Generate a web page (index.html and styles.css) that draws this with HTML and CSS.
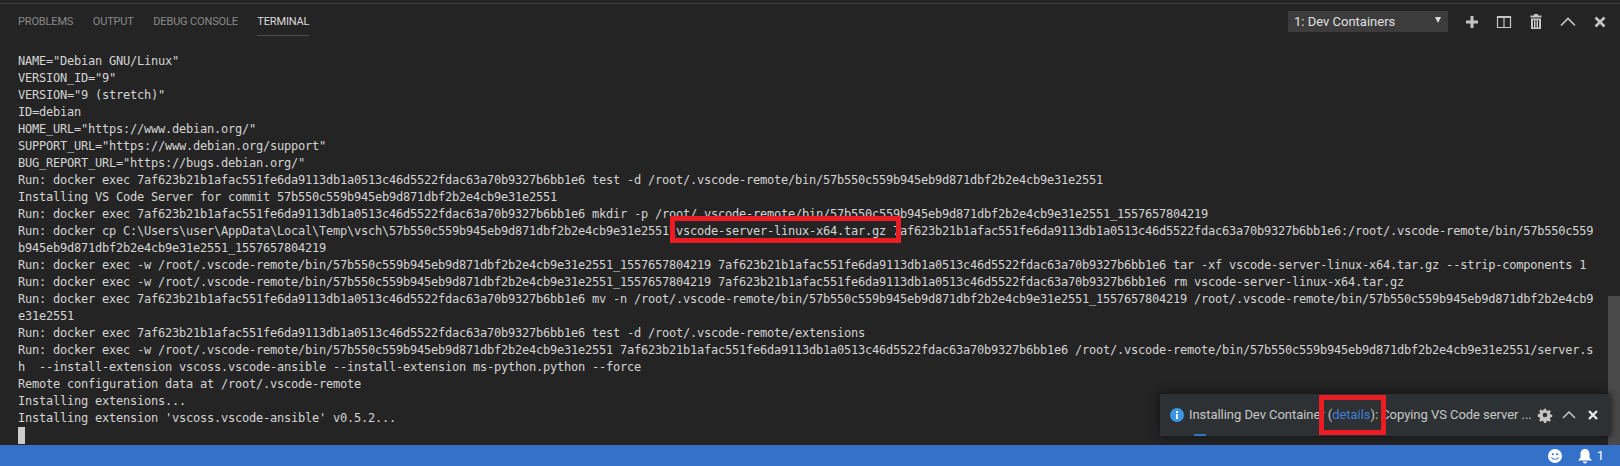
FILE: index.html
```html
<!DOCTYPE html>
<html lang="en">
<head>
<meta charset="utf-8">
<title>Terminal</title>
<link rel="stylesheet" href="styles.css">
</head>
<body>
<div class="window">
  <section class="panel">
    <header class="panel-head">
      <nav class="tabs">
        <span class="tab">PROBLEMS</span>
        <span class="tab">OUTPUT</span>
        <span class="tab">DEBUG CONSOLE</span>
        <span class="tab active">TERMINAL</span>
      </nav>
      <div class="actions">
        <div class="select"><span>1: Dev Containers</span><svg class="caret" width="6" height="6" viewBox="0 0 6 6"><path d="M0 0h6L3 6z" fill="#dcdcdc"/></svg></div>
        <svg class="act" width="16" height="16" viewBox="0 0 16 16"><path d="M6.500 2h3v4.500H14v3H9.500V14h-3V9.500H2v-3h4.500z" fill="#c5c5c5"/></svg>
        <svg class="act" width="16" height="16" viewBox="0 0 16 16"><path d="M1.500 2.500h13v11h-13zM8 2.500v11M1.500 3.500h13" fill="none" stroke="#c5c5c5" stroke-width="1.200"/></svg>
        <svg class="act" width="16" height="16" viewBox="0 0 16 16"><path d="M6 0h4v1.500h3.500V3.500h-11V1.500H6zM3 4.500h10V15H3z" fill="#c5c5c5"/><path d="M5.500 6v7.500M8 6v7.500M10.500 6v7.500" stroke="#242424" stroke-width="1"/></svg>
        <svg class="act" width="16" height="16" viewBox="0 0 16 16"><path d="M1 11.500l7-7 7 7" fill="none" stroke="#c5c5c5" stroke-width="1.700"/></svg>
        <svg class="act" width="16" height="16" viewBox="0 0 16 16"><path d="M3.500 3.500l9 9M12.500 3.500l-9 9" fill="none" stroke="#c5c5c5" stroke-width="2.600"/></svg>
      </div>
    </header>
    <div class="term">
<div class="ln">NAME="Debian GNU/Linux"</div>
<div class="ln">VERSION_ID="9"</div>
<div class="ln">VERSION="9 (stretch)"</div>
<div class="ln">ID=debian</div>
<div class="ln">HOME_URL="https://www.debian.org/"</div>
<div class="ln">SUPPORT_URL="https://www.debian.org/support"</div>
<div class="ln">BUG_REPORT_URL="https://bugs.debian.org/"</div>
<div class="ln">Run: docker exec 7af623b21b1afac551fe6da9113db1a0513c46d5522fdac63a70b9327b6bb1e6 test -d /root/.vscode-remote/bin/57b550c559b945eb9d871dbf2b2e4cb9e31e2551</div>
<div class="ln">Installing VS Code Server for commit 57b550c559b945eb9d871dbf2b2e4cb9e31e2551</div>
<div class="ln">Run: docker exec 7af623b21b1afac551fe6da9113db1a0513c46d5522fdac63a70b9327b6bb1e6 mkdir -p /root/.vscode-remote/bin/57b550c559b945eb9d871dbf2b2e4cb9e31e2551_1557657804219</div>
<div class="ln">Run: docker cp C:\Users\user\AppData\Local\Temp\vsch\57b550c559b945eb9d871dbf2b2e4cb9e31e2551\vscode-server-linux-x64.tar.gz 7af623b21b1afac551fe6da9113db1a0513c46d5522fdac63a70b9327b6bb1e6:/root/.vscode-remote/bin/57b550c559</div>
<div class="ln">b945eb9d871dbf2b2e4cb9e31e2551_1557657804219</div>
<div class="ln">Run: docker exec -w /root/.vscode-remote/bin/57b550c559b945eb9d871dbf2b2e4cb9e31e2551_1557657804219 7af623b21b1afac551fe6da9113db1a0513c46d5522fdac63a70b9327b6bb1e6 tar -xf vscode-server-linux-x64.tar.gz --strip-components 1</div>
<div class="ln">Run: docker exec -w /root/.vscode-remote/bin/57b550c559b945eb9d871dbf2b2e4cb9e31e2551_1557657804219 7af623b21b1afac551fe6da9113db1a0513c46d5522fdac63a70b9327b6bb1e6 rm vscode-server-linux-x64.tar.gz</div>
<div class="ln">Run: docker exec 7af623b21b1afac551fe6da9113db1a0513c46d5522fdac63a70b9327b6bb1e6 mv -n /root/.vscode-remote/bin/57b550c559b945eb9d871dbf2b2e4cb9e31e2551_1557657804219 /root/.vscode-remote/bin/57b550c559b945eb9d871dbf2b2e4cb9</div>
<div class="ln">e31e2551</div>
<div class="ln">Run: docker exec 7af623b21b1afac551fe6da9113db1a0513c46d5522fdac63a70b9327b6bb1e6 test -d /root/.vscode-remote/extensions</div>
<div class="ln">Run: docker exec -w /root/.vscode-remote/bin/57b550c559b945eb9d871dbf2b2e4cb9e31e2551 7af623b21b1afac551fe6da9113db1a0513c46d5522fdac63a70b9327b6bb1e6 /root/.vscode-remote/bin/57b550c559b945eb9d871dbf2b2e4cb9e31e2551/server.s</div>
<div class="ln">h  --install-extension vscoss.vscode-ansible --install-extension ms-python.python --force</div>
<div class="ln">Remote configuration data at /root/.vscode-remote</div>
<div class="ln">Installing extensions...</div>
<div class="ln">Installing extension 'vscoss.vscode-ansible' v0.5.2...</div>
<div class="ln"><span class="cursor"></span></div>
    </div>
    <div class="scrollbar"></div>
    <div class="mark mark-file"></div>
    <div class="toast">
      <svg class="info" width="14" height="14" viewBox="0 0 14 14"><circle cx="7" cy="7" r="7" fill="#3b97e3"/><path d="M6 3h2v2H6zM6 6h2v5H6z" fill="#fff"/></svg>
      <div class="toast-msg">Installing Dev Container (<span class="link">details</span>): Copying VS Code server ...</div>
      <div class="toast-acts">
        <svg width="16" height="16" viewBox="0 0 16 16"><path d="M6.800 1h2.400l.4 2 1.500.6 1.700-1.100 1.700 1.700-1.100 1.700.6 1.500 2 .4v2.400l-2 .4-.6 1.500 1.100 1.700-1.700 1.700-1.700-1.100-1.500.6-.4 2H6.800l-.4-2-1.500-.6-1.700 1.100-1.700-1.700 1.100-1.700-.6-1.500-2-.4V7.200l2-.4.6-1.500-1.100-1.700 1.700-1.700 1.700 1.100 1.500-.6z" transform="translate(.8 .8) scale(.9)" fill="#c5c5c5"/><circle cx="8" cy="8" r="2.300" fill="#2e3133"/></svg>
        <svg width="16" height="16" viewBox="0 0 16 16"><path d="M2 11l6-6 6 6" fill="none" stroke="#c5c5c5" stroke-width="1.500"/></svg>
        <svg width="16" height="16" viewBox="0 0 16 16"><path d="M4 4l8 8M12 4l-8 8" fill="none" stroke="#e8e8e8" stroke-width="2.400"/></svg>
      </div>
      <div class="progress"></div>
      <div class="mark mark-link"></div>
    </div>
  </section>
  <footer class="status">
    <svg width="14" height="14" viewBox="0 0 16 16"><circle cx="8" cy="8" r="8" fill="#fff"/><circle cx="5.500" cy="6" r="1.200" fill="#3471c8"/><circle cx="10.500" cy="6" r="1.200" fill="#3471c8"/><path d="M4 9.500c1 3 7 3 8 0" fill="none" stroke="#3471c8" stroke-width="1.300"/></svg>
    <div class="bell">
      <svg width="14" height="16" viewBox="0 0 14 16"><path d="M7 1c3 0 4.500 2.300 4.500 5v3.500L14 12.500H0L2.500 9.500V6C2.500 3.300 4 1 7 1zM5 13.500h4c0 1-1 2-2 2s-2-1-2-2z" fill="#fff"/></svg>
      <span>1</span>
    </div>
  </footer>
</div>
</body>
</html>
```
FILE: styles.css
```css
* { box-sizing: border-box; }
html, body { margin: 0; padding: 0; }
body { width: 1620px; height: 466px; overflow: hidden; background: #242424; }
.window { display: flex; flex-direction: column; width: 1620px; height: 466px; }
.panel { position: relative; flex: 1; min-height: 0; background: #242424; border-top: 1px solid #3f3f3f; margin-top: 3px; }
.panel-head { display: flex; justify-content: space-between; align-items: flex-start; height: 44px; padding: 0 0 0 18px; }
.tabs { display: flex; gap: 19.5px; }
.tab { font: 11px/18px Roboto, "Noto Sans", sans-serif; letter-spacing: -0.15px; color: #8a8a8a; padding: 9px 0 6px; height: 32px; border-bottom: 1px solid transparent; }
.tab.active { color: #dcdcdc; border-bottom-color: #4e4e4e; }
.actions { display: flex; align-items: center; padding: 7px 0 0 0; margin-right: 12px; gap: 16px; }
.select { display: flex; align-items: center; justify-content: space-between; width: 160px; height: 21px; background: #3c3c3c; color: #e0e0e0; font: 13px/21px Roboto, "Noto Sans", sans-serif; padding: 0 7px 0 6px; }
.caret { margin-top: -3px; }
.term { padding: 5px 0 0 18px; font-family: "DejaVu Sans Mono", monospace; font-size: 12px; letter-spacing: -0.224px; color: #d4d4d4; }
.ln { height: 17px; line-height: 17px; white-space: pre; }
.cursor { display: block; width: 7px; height: 17px; background: #cccccc; }
.scrollbar { position: absolute; right: 0; top: 292px; bottom: 0; width: 12px; background: #4a4a4a; }
.mark { position: absolute; border: 5px solid #ec1c24; }
.mark-file { left: 670px; top: 212px; width: 231px; height: 27px; }
.toast { position: absolute; left: 1160px; top: 390px; width: 450px; height: 42px; display: flex; align-items: center; padding: 0 9px 0 10px; background: #2e3133; box-shadow: 0 0 8px #111; }
.info { flex: none; }
.toast-msg { flex: 1; margin-left: 5px; font: 13px/20px Roboto, "Noto Sans", sans-serif; letter-spacing: -0.05px; color: #c8c8c8; white-space: nowrap; overflow: hidden; }
.link { color: #3f7fd8; }
.toast-acts { display: flex; gap: 8px; align-items: center; }
.progress { position: absolute; left: 34px; bottom: 0; width: 12px; height: 2px; background: #3471c8; }
.mark-link { left: 159px; top: 1px; width: 67px; height: 40px; }
.status { display: flex; justify-content: flex-end; align-items: center; height: 21px; flex: none; background: #3471c8; padding-right: 16px; gap: 16px; }
.bell { display: flex; align-items: center; gap: 5px; color: #fff; font: 13px/21px Roboto, "Noto Sans", sans-serif; }
```
